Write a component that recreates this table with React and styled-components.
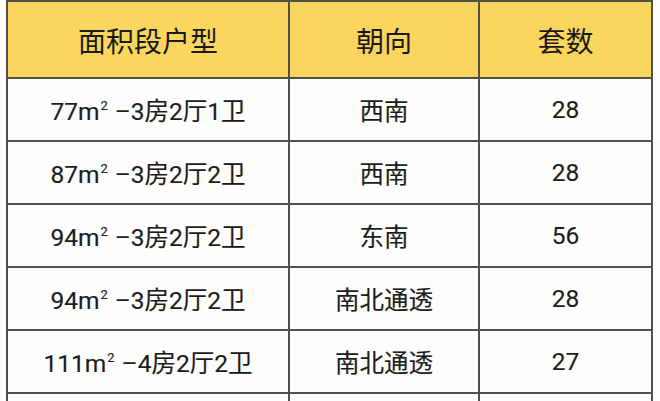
import React from "react";
import styled, { createGlobalStyle } from "styled-components";

const Global = createGlobalStyle`
  html, body { margin: 0; padding: 0; background: #fdfdfb; }
  body { font-family: Roboto, "Noto Sans CJK SC", sans-serif; color: #1c1c1c; }
`;

const Wrap = styled.div`
  height: 401px;
  overflow: hidden;
  padding: 0 0 0 6px;
`;

const Table = styled.table`
  border-collapse: collapse;
  table-layout: fixed;
  width: 645px;
  background: #fdfdfb;
`;

const HeadCell = styled.th`
  background: #fad65e;
  border: 2px solid #505050;
  height: 75px;
  padding: 0;
  font-weight: 400;
  font-size: 28px;
  text-align: center;
  vertical-align: middle;
  color: #1a1a1a;
`;

const Cell = styled.td`
  border: 2px solid #505050;
  height: 61px;
  padding: 0;
  font-size: 24.5px;
  text-align: center;
  vertical-align: middle;
  white-space: nowrap;
  color: #1c1c1c;
  -webkit-text-stroke: 0.15px #1c1c1c;
`;

const Sup = styled.span`
  font-size: 13px;
  position: relative;
  top: -10px;
  margin: 0 7px 0 1px;
`;

const rows = [
  ["77", "–3房2厅1卫", "西南", "28"],
  ["87", "–3房2厅2卫", "西南", "28"],
  ["94", "–3房2厅2卫", "东南", "56"],
  ["94", "–3房2厅2卫", "南北通透", "28"],
  ["111", "–4房2厅2卫", "南北通透", "27"],
  null,
];

export default function App() {
  return (
    <Wrap>
      <Global />
      <Table>
        <colgroup>
          <col style={{ width: 282 }} />
          <col style={{ width: 190 }} />
          <col style={{ width: 173 }} />
        </colgroup>
        <thead>
          <tr>
            <HeadCell>面积段户型</HeadCell>
            <HeadCell>朝向</HeadCell>
            <HeadCell>套数</HeadCell>
          </tr>
        </thead>
        <tbody>
          {rows.map((r, i) =>
            r ? (
              <tr key={i}>
                <Cell>
                  {r[0]}m<Sup>2</Sup>
                  {r[1]}
                </Cell>
                <Cell>{r[2]}</Cell>
                <Cell>{r[3]}</Cell>
              </tr>
            ) : (
              <tr key={i}>
                <Cell />
                <Cell />
                <Cell />
              </tr>
            )
          )}
        </tbody>
      </Table>
    </Wrap>
  );
}
